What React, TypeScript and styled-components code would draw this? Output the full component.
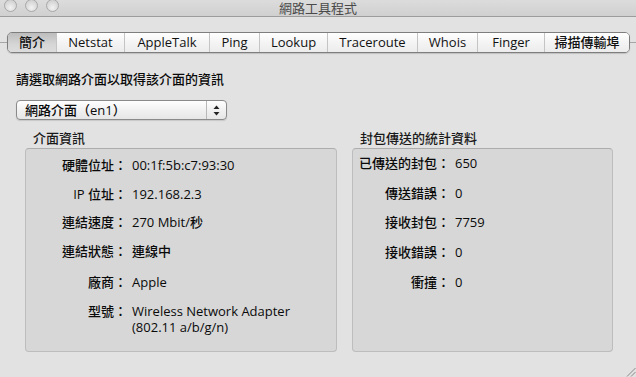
import React from "react";
import styled, { createGlobalStyle } from "styled-components";

const GlobalStyle = createGlobalStyle`
  html, body { margin: 0; padding: 0; background: #e2e2e2; overflow: hidden; }
  * { box-sizing: border-box; }
`;

const FONT = `"Open Sans", "Noto Sans CJK TC", sans-serif`;

const Window = styled.div`
  position: relative;
  width: 636px;
  height: 377px;
  background: #e2e2e2;
  font-family: ${FONT};
  font-size: 13px;
  font-weight: 500;
  color: #0a0a0a;
  display: flex;
  flex-direction: column;
  overflow: hidden;
`;

const TitleBar = styled.div`
  height: 17px;
  display: grid;
  grid-template-columns: 1fr auto 1fr;
  align-items: start;
  background: linear-gradient(#dcdcdc, #d0d0d0);
  border-bottom: 1px solid #9c9c9c;
  overflow: hidden;
`;

const Lights = styled.div`
  display: flex;
  gap: 8px;
  padding-left: 4px;
  margin-top: -1px;
`;

const Light = styled.span`
  width: 13px;
  height: 13px;
  border-radius: 50%;
  border: 1px solid #a8a8a8;
  background: radial-gradient(circle at 50% 70%, #f2f2f2, #d4d4d4 70%);
`;

const Title = styled.div`
  font-size: 13px;
  line-height: 14px;
  font-weight: 400;
  color: #4a4a4a;
  margin-top: 1px;
`;

const TabRow = styled.div`
  margin-top: 15px;
  height: 21px;
  display: flex;
  align-items: center;
`;

const TabLine = styled.div<{ $w?: number }>`
  height: 1px;
  background: #a6a6a6;
  width: ${(p) => (p.$w ? `${p.$w}px` : "auto")};
  flex: ${(p) => (p.$w ? "none" : "1")};
`;

const Segments = styled.div`
  display: flex;
  height: 21px;
  border: 1px solid #7e7e7e;
  border-radius: 5px;
  overflow: hidden;
  box-shadow: 0 1px 1px rgba(0, 0, 0, 0.15);
`;

const Tab = styled.div<{ $w: number; $active?: boolean }>`
  width: ${(p) => p.$w}px;
  display: flex;
  align-items: center;
  justify-content: center;
  line-height: 19px;
  color: #111;
  background: ${(p) =>
    p.$active
      ? "linear-gradient(#bdbdbd, #d6d6d6 60%, #dcdcdc)"
      : "linear-gradient(#ffffff, #f4f4f4 50%, #ececec)"};
  border-left: 1px solid #c4c4c4;
  &:first-child { border-left: none; }
`;

const Body = styled.div`
  padding: 0 16px;
  display: flex;
  flex-direction: column;
`;

const Instruction = styled.div`
  margin-top: 17px;
  line-height: 18px;
  font-size: 13px;
`;

const Popup = styled.div`
  margin-top: 12px;
  width: 211px;
  height: 20px;
  border: 1px solid #8a8a8a;
  border-radius: 4px;
  background: linear-gradient(#ffffff, #f1f1f1 50%, #e6e6e6);
  box-shadow: 0 1px 1px rgba(0, 0, 0, 0.12);
  display: flex;
  align-items: center;
`;

const PopupText = styled.div`
  flex: 1;
  padding-left: 8px;
  line-height: 18px;
`;

const PopupArrows = styled.div`
  width: 20px;
  height: 100%;
  border-left: 1px solid #b8b8b8;
  display: flex;
  align-items: center;
  justify-content: center;
`;

const Groups = styled.div`
  margin-top: 10px;
  margin-left: 9px;
  display: flex;
  gap: 15px;
`;

const Group = styled.div<{ $w: number }>`
  width: ${(p) => p.$w}px;
  display: flex;
  flex-direction: column;
`;

const GroupLabel = styled.div`
  padding-left: 8px;
  line-height: 16px;
  margin-bottom: 2px;
  color: #1a1a1a;
`;

const Box = styled.div<{ $top: number; $gap: number }>`
  height: 204px;
  background: #d7d7d7;
  border: 1px solid #bdbdbd;
  border-top-color: #adadad;
  border-radius: 4px;
  padding-top: ${(p) => p.$top}px;
  display: grid;
  grid-auto-rows: min-content;
  row-gap: ${(p) => p.$gap}px;
  align-content: start;
`;

const Row = styled.div<{ $labelW: number; $extra?: number }>`
  display: grid;
  grid-template-columns: ${(p) => p.$labelW}px 1fr;
  column-gap: 5px;
  line-height: 16px;
  margin-top: ${(p) => p.$extra ?? 0}px;
`;

const Label = styled.div`
  text-align: right;
  white-space: nowrap;
`;

const Value = styled.div`
  white-space: pre-line;
`;

const Grip = styled.svg`
  position: absolute;
  right: 0;
  bottom: 0;
`;

const tabs: [string, number][] = [
  ["簡介", 48],
  ["Netstat", 68],
  ["AppleTalk", 85],
  ["Ping", 50],
  ["Lookup", 68],
  ["Traceroute", 90],
  ["Whois", 60],
  ["Finger", 67],
  ["掃描傳輸埠", 85],
];

const info: [string, string, number?][] = [
  ["硬體位址：", "00:1f:5b:c7:93:30"],
  ["IP 位址：", "192.168.2.3"],
  ["連結速度：", "270 Mbit/秒"],
  ["連結狀態：", "連線中"],
  ["廠商：", "Apple", 3],
  ["型號：", "Wireless Network Adapter\n(802.11 a/b/g/n)"],
];

const stats: [string, string][] = [
  ["已傳送的封包：", "650"],
  ["傳送錯誤：", "0"],
  ["接收封包：", "7759"],
  ["接收錯誤：", "0"],
  ["衝撞：", "0"],
];

export default function App() {
  return (
    <>
      <GlobalStyle />
      <Window>
        <TitleBar>
          <Lights>
            <Light />
            <Light />
            <Light />
          </Lights>
          <Title>網路工具程式</Title>
          <div />
        </TitleBar>
        <TabRow>
          <TabLine $w={7} />
          <Segments>
            {tabs.map(([t, w], i) => (
              <Tab key={t} $w={w} $active={i === 0}>
                {t}
              </Tab>
            ))}
          </Segments>
          <TabLine />
        </TabRow>
        <Body>
          <Instruction>請選取網路介面以取得該介面的資訊</Instruction>
          <Popup>
            <PopupText>網路介面（en1）</PopupText>
            <PopupArrows>
              <svg width="7" height="11" viewBox="0 0 7 11">
                <path d="M3.5 0.5 L6.5 4 L0.5 4 Z" fill="#222" />
                <path d="M3.5 10.5 L6.5 7 L0.5 7 Z" fill="#222" />
              </svg>
            </PopupArrows>
          </Popup>
          <Groups>
            <Group $w={312}>
              <GroupLabel>介面資訊</GroupLabel>
              <Box $top={8} $gap={12.5}>
                {info.map(([l, v, e]) => (
                  <Row key={l} $labelW={101} $extra={e}>
                    <Label>{l}</Label>
                    <Value>{v}</Value>
                  </Row>
                ))}
              </Box>
            </Group>
            <Group $w={261}>
              <GroupLabel>封包傳送的統計資料</GroupLabel>
              <Box $top={6} $gap={13.7}>
                {stats.map(([l, v]) => (
                  <Row key={l} $labelW={97}>
                    <Label>{l}</Label>
                    <Value>{v}</Value>
                  </Row>
                ))}
              </Box>
            </Group>
          </Groups>
        </Body>
        <Grip width="11" height="11" viewBox="0 0 11 11">
          <path d="M10.5 2 L2 10.5 M10.5 6 L6 10.5" stroke="#8a8a8a" strokeWidth="1" />
        </Grip>
      </Window>
    </>
  );
}
